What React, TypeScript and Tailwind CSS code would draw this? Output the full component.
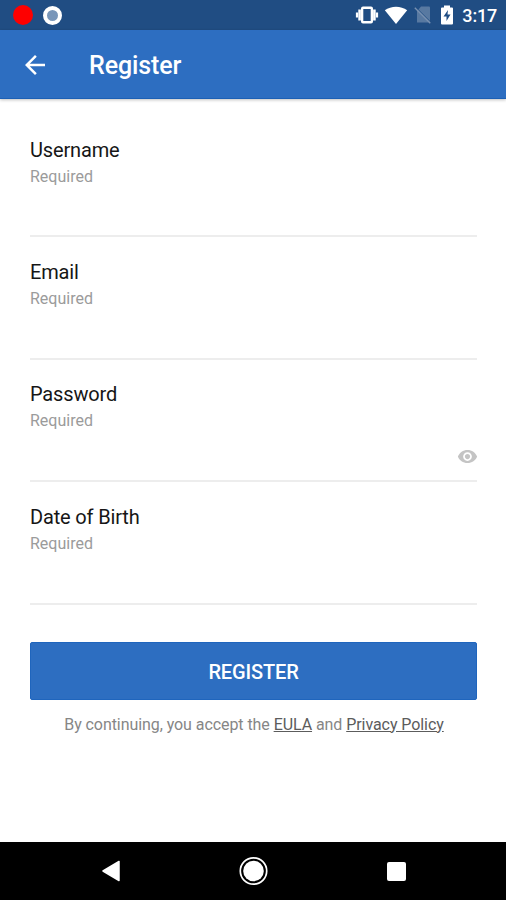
import { useState } from 'react';
import { MdArrowBack, MdVisibility } from 'react-icons/md';

const FIELDS = [
  { id: 'username', label: 'Username', type: 'text' },
  { id: 'email', label: 'Email', type: 'email' },
  { id: 'password', label: 'Password', type: 'password' },
  { id: 'dob', label: 'Date of Birth', type: 'text' },
];

function StatusBar() {
  return (
    <div className="h-[30px] shrink-0 bg-[#204d83] flex items-center justify-between pl-[13px] pr-[9px]">
      <div className="flex items-center gap-[10px]">
        <div className="w-5 h-5 rounded-full bg-[#fe0000]" />
        <div className="w-[19px] h-[19px] rounded-full bg-[#7896b9] border-4 border-white" />
      </div>
      <div className="flex items-center">
        {/* Vibrate */}
        <svg width="24" height="18" viewBox="0 0 24 18" className="mr-[5px]">
          <path d="M8 .5h8a2 2 0 0 1 2 2v13a2 2 0 0 1-2 2H8a2 2 0 0 1-2-2v-13a2 2 0 0 1 2-2zM8.300 3v12h7.400V3z" fill="#fff" fillRule="evenodd" />
          <path d="M4.600 3.500v11M19.400 3.500v11" stroke="#fff" strokeWidth="2.600" />
          <path d="M2 6.500v5M22 6.500v5" stroke="#fff" strokeWidth="2.200" />
        </svg>
        {/* Wifi */}
        <svg width="24" height="18" viewBox="0 0 24 18" className="mr-[6px]">
          <path d="M.8 4.300C7-.6 17-.6 23.200 4.300L12 18z" fill="#fff" />
        </svg>
        {/* No sim */}
        <svg width="18" height="18" viewBox="0 0 18 18" className="mr-[8px]">
          <path d="M7 .5h8a1 1 0 0 1 1 1v15H3V5z" fill="#5879a1" />
          <path d="M1.800 1.300l15 15" stroke="#204d83" strokeWidth="1" />
          <path d="M.8 1.800l15.500 15.500" stroke="#7891b1" strokeWidth="1.300" />
        </svg>
        {/* Battery */}
        <svg width="14" height="20" viewBox="0 0 14 20" className="mr-[8px]">
          <path d="M4 .5h6v2h2a1 1 0 0 1 1 1v15a1 1 0 0 1-1 1H2a1 1 0 0 1-1-1v-15a1 1 0 0 1 1-1h2z" fill="#fff" />
          <path d="M8 5l-4.500 6.500h3V16L10.500 9.500h-3z" fill="#204d83" />
        </svg>
        <span className="pt-px text-[18px] leading-[30px] tracking-[-0.2px] font-medium text-white">3:17</span>
      </div>
    </div>
  );
}

function NavBar() {
  return (
    <nav className="h-[58px] shrink-0 bg-black flex items-center justify-between pl-[101px] pr-[100px]">
      <button aria-label="Back">
        <svg width="20" height="22" viewBox="0 0 20 22">
          <path d="M18 1.500v19L2 11z" fill="#fff" stroke="#fff" strokeWidth="1.500" strokeLinejoin="round" />
        </svg>
      </button>
      <button aria-label="Home">
        <svg width="30" height="30" viewBox="0 0 30 30">
          <circle cx="14.500" cy="15" r="13.200" fill="none" stroke="#fff" strokeWidth="1.700" />
          <circle cx="14.500" cy="15" r="10.300" fill="#fff" />
        </svg>
      </button>
      <button aria-label="Recents" className="w-[19px] h-[19px] rounded-[2px] bg-white" />
    </nav>
  );
}

export default function App() {
  const [values, setValues] = useState<Record<string, string>>({});
  const [showPassword, setShowPassword] = useState(false);

  return (
    <div className="h-screen flex flex-col bg-white font-[Roboto,sans-serif]">
      <StatusBar />

      {/* Header */}
      <header className="h-[69px] shrink-0 bg-[#2d6ec1] border-b border-[#1c60b5] flex items-center pl-5 shadow-[0_1px_3px_rgba(0,0,0,0.25)]">
        <button aria-label="Go back" className="pt-px text-white">
          <MdArrowBack className="w-[30px] h-[30px]" />
        </button>
        <h1 className="ml-[39px] mt-[3px] text-[25px] leading-[30px] tracking-[-0.1px] font-medium text-white">Register</h1>
      </header>

      <main className="flex-1 min-h-0 px-[30px] pt-4">
        {FIELDS.map((f) => (
          <div key={f.id} className="w-[447px] h-[122.4px] pt-[22.6px] border-b-2 border-[#ededed] flex flex-col">
            <label htmlFor={f.id} className="text-[20px] leading-6 tracking-[-0.15px] text-[#161616]">{f.label}</label>
            <span className="mt-[5px] text-[16px] leading-5 text-[#9b9b9b]">Required</span>
            <div className="flex-1 flex items-center">
              <input
                id={f.id}
                type={f.type === 'password' && showPassword ? 'text' : f.type}
                value={values[f.id] || ''}
                onChange={(e) => setValues((p) => ({ ...p, [f.id]: e.target.value }))}
                className="flex-1 min-w-0 text-[18px] leading-6 text-[#161616] outline-none"
              />
              {f.type === 'password' && (
                <button aria-label="Show password" onClick={() => setShowPassword(!showPassword)} className="-mr-px mt-px text-[#c4c4c4]">
                  <MdVisibility className="w-[21px] h-[21px]" />
                </button>
              )}
            </div>
          </div>
        ))}

        <button className="mt-[37px] w-[447px] h-[58px] pt-[2px] rounded-[2px] bg-[#2d6ec1] border border-[#1f65bd] text-[20px] tracking-[-0.15px] font-medium text-white">
          REGISTER
        </button>
        <p className="mt-[15px] pl-[2px] text-center text-[16px] leading-5 tracking-[-0.07px] text-[#868686] whitespace-nowrap">
          By continuing, you accept the{' '}
          <a className="underline text-[#5c5c5c]">EULA</a> and{' '}
          <a className="underline text-[#5c5c5c]">Privacy Policy</a>
        </p>
      </main>

      <NavBar />
    </div>
  );
}
